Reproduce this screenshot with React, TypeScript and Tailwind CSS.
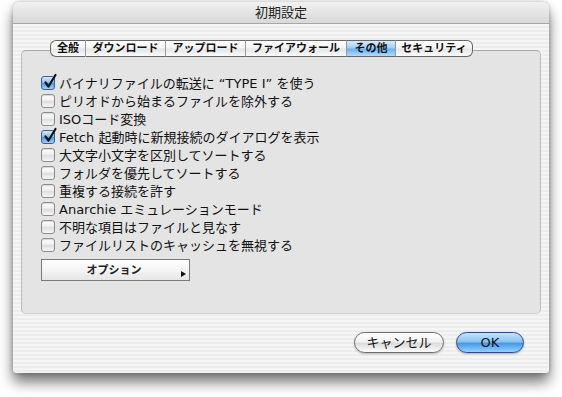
import React from "react";

const font = "font-['DejaVu_Sans','Noto_Sans_CJK_JP',sans-serif]";

const tabs: { label: string; w: string; selected?: boolean }[] = [
  { label: "全般", w: "w-[36px]" },
  { label: "ダウンロード", w: "w-[80px]" },
  { label: "アップロード", w: "w-[80px]" },
  { label: "ファイアウォール", w: "w-[101px]" },
  { label: "その他", w: "w-[49px]", selected: true },
  { label: "セキュリティ", w: "w-[77px]" },
];

const items: { label: string; checked?: boolean }[] = [
  { label: "バイナリファイルの転送に “TYPE I” を使う", checked: true },
  { label: "ピリオドから始まるファイルを除外する" },
  { label: "ISOコード変換" },
  { label: "Fetch 起動時に新規接続のダイアログを表示", checked: true },
  { label: "大文字小文字を区別してソートする" },
  { label: "フォルダを優先してソートする" },
  { label: "重複する接続を許す" },
  { label: "Anarchie エミュレーションモード" },
  { label: "不明な項目はファイルと見なす" },
  { label: "ファイルリストのキャッシュを無視する" },
];

function Checkbox({ checked }: { checked?: boolean }) {
  if (checked) {
    return (
      <div className="relative w-[14px] h-[14px] rounded-[3px] border border-[#3f5f93] bg-[linear-gradient(180deg,#d2e8fb_0%,#8cc3f1_45%,#4f9de6_55%,#9bd4ff_100%)] shrink-0">
        <svg className="absolute left-[1px] top-[-3px] overflow-visible" width="14" height="15" viewBox="0 0 14 15">
          <path d="M2.5 8.5 L5.5 12.5 L12.5 1" fill="none" stroke="#111" strokeWidth="2.2" strokeLinecap="round" strokeLinejoin="round" />
        </svg>
      </div>
    );
  }
  return (
    <div className="w-[14px] h-[14px] rounded-[3px] border border-[#8c8c8c] bg-[linear-gradient(180deg,#ffffff_0%,#efefef_45%,#dedede_55%,#f8f8f8_100%)] shadow-[inset_0_1px_1px_rgba(0,0,0,0.15)] shrink-0" />
  );
}

export default function App() {
  return (
    <div className={`w-[562px] h-[397px] bg-white pt-[2px] pl-[13px] ${font}`}>
      <div className="w-[536px] h-[371px] rounded-t-[7px] rounded-b-[4px] overflow-hidden flex flex-col shadow-[0_9px_14px_rgba(0,0,0,0.55),0_0_4px_rgba(0,0,0,0.25)] bg-[repeating-linear-gradient(180deg,#ededed_0px,#ededed_2px,#f5f5f5_2px,#f5f5f5_4px)]">
        {/* title bar */}
        <div className="h-[22px] shrink-0 flex items-center justify-center border-b border-[#a6a6a6] bg-[linear-gradient(180deg,#f2f2f2_0%,#e4e4e4_50%,#d9d9d9_100%)]">
          <span className="text-[13px] text-[#222] leading-none">初期設定</span>
        </div>

        {/* tabs */}
        <div className="pt-[16px] pl-[37px] relative z-10 flex">
          {tabs.map((t, i) => (
            <div
              key={t.label}
              className={`${t.w} h-[17px] flex items-center justify-center text-[11px] font-bold leading-none text-[#111] border-y border-[#666] ${
                i === 0 ? "border-l rounded-l-[6px]" : ""
              } ${i === tabs.length - 1 ? "border-r rounded-r-[6px]" : "border-r border-r-[#9a9a9a]"} ${
                t.selected
                  ? "bg-[linear-gradient(180deg,#d6ebfc_0%,#a5d0f5_45%,#6db2ee_55%,#b0dcff_100%)] border-[#4a6a9a]"
                  : "bg-[linear-gradient(180deg,#ffffff_0%,#f3f3f3_45%,#e6e6e6_55%,#fbfbfb_100%)]"
              }`}
            >
              {t.label}
            </div>
          ))}
        </div>

        {/* group box */}
        <div className="mx-[8px] mt-[-7px] h-[264px] rounded-[5px] border border-[#a9a9a9] border-b-[#d0d0d0] border-x-[#bdbdbd] bg-[#e4e4e4] pt-[23px] pl-[19px] flex flex-col">
          <div className="flex flex-col">
            {items.map((it) => (
              <div key={it.label} className="h-[18px] flex items-center gap-[4px]">
                <Checkbox checked={it.checked} />
                <span className="text-[13px] leading-none text-[#111] whitespace-nowrap">{it.label}</span>
              </div>
            ))}
          </div>
          <div className="mt-[5px] relative w-[149px] h-[22px] border border-[#7a7a7a] bg-[linear-gradient(180deg,#ffffff_0%,#f4f4f4_50%,#e6e6e6_100%)] flex items-center justify-center">
            <span className="text-[11px] font-bold leading-none text-[#222] pr-[3px]">オプション</span>
            <span className="absolute right-[3px] bottom-[3px] w-0 h-0 border-y-[3.5px] border-y-transparent border-l-[5px] border-l-[#111]" />
          </div>
        </div>

        {/* buttons */}
        <div className="flex justify-end gap-[12px] pr-[25px] mt-[18px]">
          <div className="w-[90px] h-[21px] rounded-full border border-[#6d6d6d] bg-[linear-gradient(180deg,#ffffff_0%,#f2f2f2_45%,#dcdcdc_55%,#fcfcfc_100%)] shadow-[0_1px_2px_rgba(0,0,0,0.25)] flex items-center justify-center">
            <span className="text-[13px] leading-none text-[#111]">キャンセル</span>
          </div>
          <div className="w-[68px] h-[21px] rounded-full border border-[#2e4a8a] bg-[linear-gradient(180deg,#c4e2fb_0%,#8dc4f2_45%,#4a98e6_55%,#8fd4ff_100%)] shadow-[0_1px_2px_rgba(0,0,0,0.3)] flex items-center justify-center">
            <span className="text-[13px] leading-none text-[#111]">OK</span>
          </div>
        </div>
      </div>
    </div>
  );
}
